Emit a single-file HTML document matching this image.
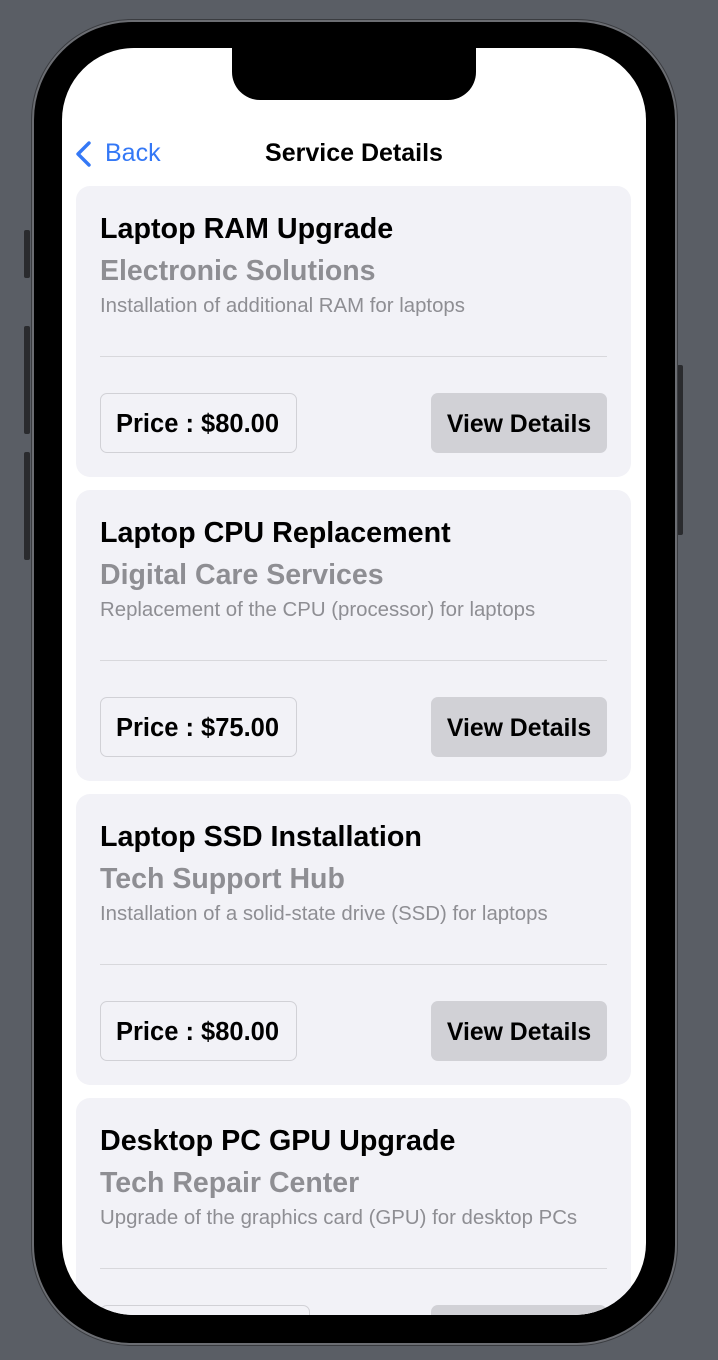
<!DOCTYPE html>
<html><head><meta charset="utf-8"><style>
*{margin:0;padding:0;box-sizing:border-box}
body{width:718px;height:1360px;background:#5a5e65;position:relative;overflow:hidden;font-family:"Liberation Sans",sans-serif}
.btn{position:absolute;background:#2a2b2e;border-radius:2px}
.frame{position:absolute;left:32px;top:20px;width:645px;height:1325px;border-radius:100px;background:#000;border:2px solid #6b6d72;box-shadow:0 0 0 1px #3a3c40}
.screen{position:absolute;left:62px;top:48px;width:584px;height:1267px;border-radius:72px;background:#fff;overflow:hidden}
.notch{position:absolute;left:170px;top:0;width:244px;height:52px;background:#000;border-radius:0 0 28px 28px}
.nav{position:absolute;top:88px;left:0;width:584px;height:34px}
.back{position:absolute;left:12px;top:0;color:#3478f6;font-size:25px;line-height:34px}
.back svg{position:absolute;left:0;top:5px}
.back span{margin-left:31px}
.ttl{position:absolute;left:0;width:584px;text-align:center;font-size:25px;font-weight:bold;line-height:34px;color:#000}
.card{position:absolute;left:14px;width:555px;height:291px;background:#f2f2f7;border-radius:14px}
.card h1{position:absolute;left:24px;top:27px;font-size:28.7px;font-weight:bold;color:#000;white-space:nowrap}
.card h2{position:absolute;left:24px;top:69px;font-size:28.5px;font-weight:bold;color:#8e8e93;white-space:nowrap}
.card p{position:absolute;left:24px;top:109px;font-size:20.4px;color:#8e8e93;white-space:nowrap}
.card .hr{position:absolute;left:24px;top:170px;width:507px;height:1px;background:#d8d8dc}
.price{position:absolute;left:24px;top:207px;height:60px;border:1.5px solid #d1d1d6;border-radius:7px;padding:0 17px 0 15px;font-size:25.5px;font-weight:bold;line-height:61px;color:#000}
.vd{position:absolute;left:355px;top:207px;width:176px;height:60px;background:#d1d1d6;border-radius:7px;text-align:center;font-size:24.8px;font-weight:bold;line-height:63px;color:#000}
</style></head><body>
<div class="btn" style="left:24px;top:230px;width:6px;height:48px"></div>
<div class="btn" style="left:24px;top:326px;width:6px;height:108px"></div>
<div class="btn" style="left:24px;top:452px;width:6px;height:108px"></div>
<div class="btn" style="left:677px;top:365px;width:6px;height:170px"></div>
<div class="frame"></div>
<div class="screen">
<div class="notch"></div>
<div class="nav"><div class="back"><svg width="20" height="26" viewBox="0 0 20 26"><path d="M15 2 L4 13 L15 24" fill="none" stroke="#3478f6" stroke-width="3.4" stroke-linecap="round" stroke-linejoin="round"/></svg><span>Back</span></div><div class="ttl">Service Details</div></div>

<div class="card" style="top:138px"><h1>Laptop RAM Upgrade</h1><h2>Electronic Solutions</h2><p>Installation of additional RAM for laptops</p><div class="hr"></div><div class="price">Price : $80.00</div><div class="vd">View Details</div></div>
<div class="card" style="top:442px"><h1>Laptop CPU Replacement</h1><h2>Digital Care Services</h2><p>Replacement of the CPU (processor) for laptops</p><div class="hr"></div><div class="price">Price : $75.00</div><div class="vd">View Details</div></div>
<div class="card" style="top:746px"><h1>Laptop SSD Installation</h1><h2>Tech Support Hub</h2><p>Installation of a solid-state drive (SSD) for laptops</p><div class="hr"></div><div class="price">Price : $80.00</div><div class="vd">View Details</div></div>
<div class="card" style="top:1050px"><h1>Desktop PC GPU Upgrade</h1><h2>Tech Repair Center</h2><p>Upgrade of the graphics card (GPU) for desktop PCs</p><div class="hr"></div><div class="price" style="width:210px">Price : $120.00</div><div class="vd">View Details</div></div>
</div>
</body></html>
